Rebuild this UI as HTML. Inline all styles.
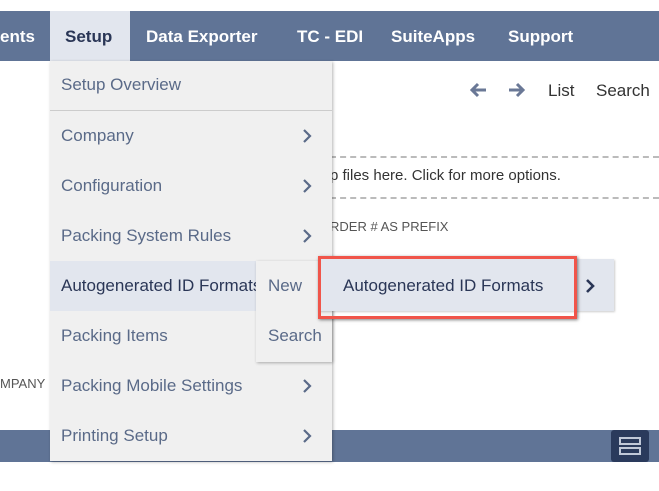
<!DOCTYPE html>
<html><head><style>
*{margin:0;padding:0;box-sizing:border-box}
body{width:659px;height:491px;background:#fff;position:relative;overflow:hidden;font-family:"Liberation Sans",sans-serif;}
.a{position:absolute;white-space:nowrap}
.nav{left:0;top:11px;width:659px;height:50px;background:#607496}
.nt{color:#fff;font-weight:bold;font-size:17px;top:27px}
.dd{left:50px;top:61px;width:282px;height:400px;background:#f0f0f0;box-shadow:1px 1px 3px rgba(0,0,0,.3)}
.mi{color:#5a6a88;font-size:17px;left:61px}
.ch{left:302px}
</style></head><body>
<div class="a nav"></div>
<div class="a nt" style="left:0">ents</div>
<div class="a" style="left:50px;top:11px;width:80px;height:50px;background:#e2e6ee"></div>
<div class="a nt" style="left:65px;color:#2a3656">Setup</div>
<div class="a nt" style="left:146px">Data Exporter</div>
<div class="a nt" style="left:297px">TC - EDI</div>
<div class="a nt" style="left:391px">SuiteApps</div>
<div class="a nt" style="left:508px">Support</div>
<svg class="a" style="left:469px;top:82px" width="18" height="16" viewBox="0 0 18 16"><path d="M17 8H3M9 2L3 8l6 6" stroke="#6a7896" stroke-width="3" fill="none"/></svg>
<svg class="a" style="left:508px;top:82px" width="18" height="16" viewBox="0 0 18 16"><path d="M1 8h14M9 2l6 6-6 6" stroke="#6a7896" stroke-width="3" fill="none"/></svg>
<div class="a" style="left:548px;top:81px;font-size:17px;color:#333">List</div>
<div class="a" style="left:596px;top:81px;font-size:17px;color:#333">Search</div>
<div class="a" style="left:330px;top:156px;width:329px;border-top:2px dashed #bbb"></div>
<div class="a" style="left:330px;top:197px;width:329px;border-top:2px dashed #bbb"></div>
<div class="a" style="left:330px;top:167px;font-size:15px;color:#333">p files here. Click for more options.</div>
<div class="a" style="left:330px;top:219px;font-size:13px;color:#555">RDER # AS PREFIX</div>
<div class="a" style="left:0;top:376px;font-size:13px;color:#555">MPANY</div>
<div class="a" style="left:0;top:430px;width:659px;height:32px;background:#607496"></div>
<div class="a" style="left:611px;top:430px;width:38px;height:32px;background:#2a3a5c;border-radius:3px"></div>
<div class="a" style="left:619px;top:437px;width:22px;height:8px;border:2px solid #c0c8d8"></div>
<div class="a" style="left:619px;top:447px;width:22px;height:8px;border:2px solid #c0c8d8"></div>
<div class="a dd"></div>
<div class="a" style="left:50px;top:110px;width:282px;height:1px;background:#ccc"></div>
<div class="a" style="left:50px;top:261px;width:282px;height:50px;background:#e2e6ee"></div>
<div class="a mi" style="top:75px">Setup Overview</div>
<div class="a mi" style="top:126px">Company</div><svg class="a ch" style="top:128px" width="10" height="16"><path d="M2 2l6 6-6 6" stroke="#5a6a88" stroke-width="2.2" fill="none"/></svg>
<div class="a mi" style="top:176px">Configuration</div><svg class="a ch" style="top:178px" width="10" height="16"><path d="M2 2l6 6-6 6" stroke="#5a6a88" stroke-width="2.2" fill="none"/></svg>
<div class="a mi" style="top:226px">Packing System Rules</div><svg class="a ch" style="top:228px" width="10" height="16"><path d="M2 2l6 6-6 6" stroke="#5a6a88" stroke-width="2.2" fill="none"/></svg>
<div class="a mi" style="top:276px;color:#2a3656">Autogenerated ID Formats</div>
<div class="a mi" style="top:326px">Packing Items</div>
<div class="a mi" style="top:376px">Packing Mobile Settings</div><svg class="a ch" style="top:378px" width="10" height="16"><path d="M2 2l6 6-6 6" stroke="#5a6a88" stroke-width="2.2" fill="none"/></svg>
<div class="a mi" style="top:426px">Printing Setup</div><svg class="a ch" style="top:428px" width="10" height="16"><path d="M2 2l6 6-6 6" stroke="#5a6a88" stroke-width="2.2" fill="none"/></svg>
<div class="a" style="left:256px;top:261px;width:76px;height:101px;background:#f0f0f0;box-shadow:1px 1px 3px rgba(0,0,0,.3)"></div>
<div class="a mi" style="left:268px;top:276px">New</div>
<div class="a mi" style="left:268px;top:326px">Search</div>
<div class="a" style="left:318px;top:259px;width:296px;height:52px;background:#e2e6ee;box-shadow:1px 1px 2px rgba(0,0,0,.2)"></div>
<div class="a" style="left:318px;top:256px;width:259px;height:63px;border:3px solid #f0554a;box-shadow:1px 1px 3px rgba(0,0,0,.5)"></div>
<div class="a" style="left:343px;top:276px;font-size:17px;color:#2a3656">Autogenerated ID Formats</div>
<svg class="a" style="left:585px;top:278px" width="10" height="16"><path d="M2 2l6 6-6 6" stroke="#2a3656" stroke-width="2.6" fill="none"/></svg>
</body></html>
